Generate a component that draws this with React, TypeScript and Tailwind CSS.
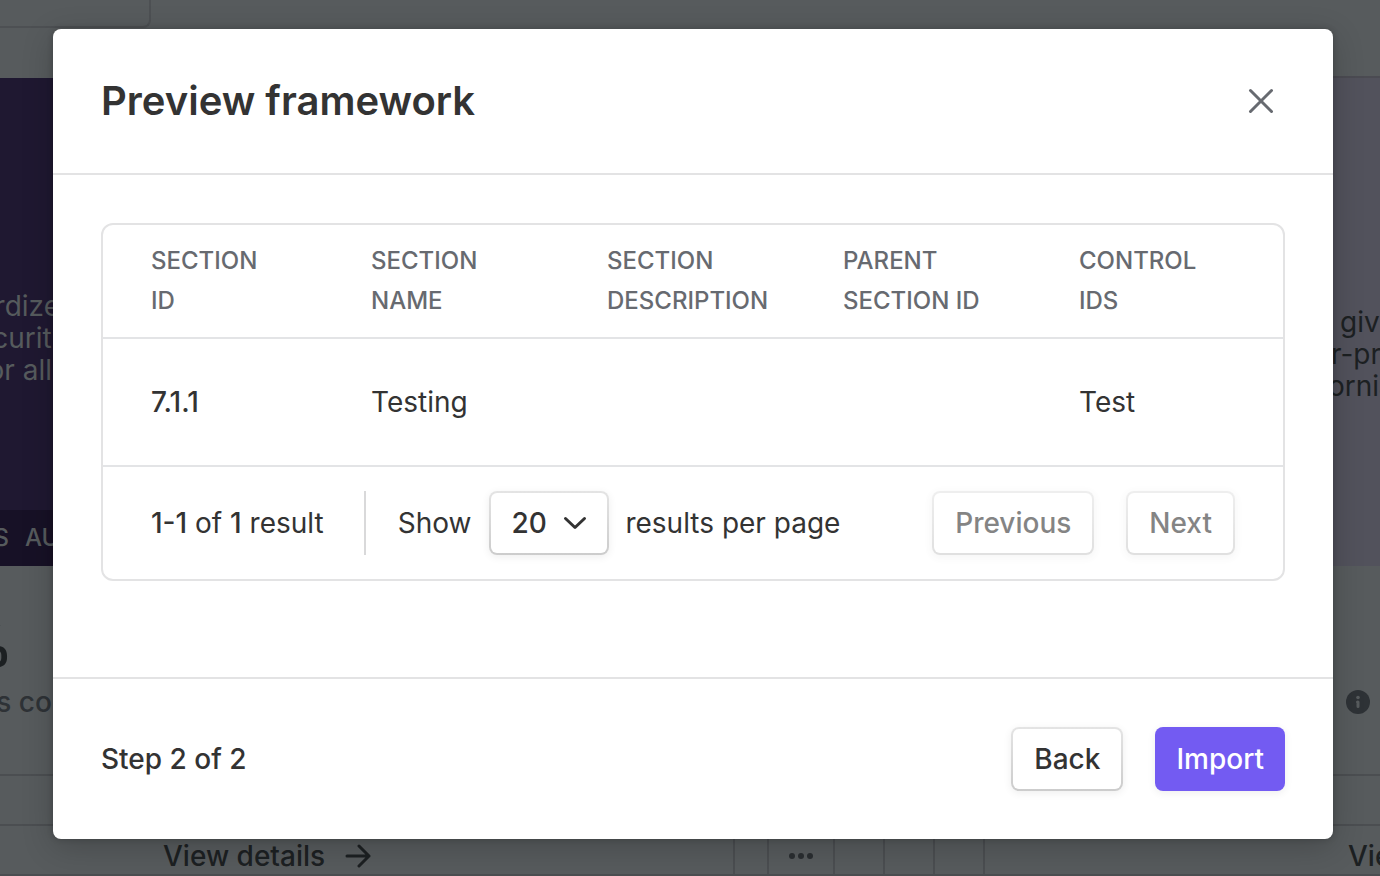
import React from 'react';

const COLUMNS = [
  { label: 'Section\nID', className: 'w-[268px] pl-12' },
  { label: 'Section\nname', className: 'w-1/5' },
  { label: 'Section\ndescription', className: 'w-1/5' },
  { label: 'Parent\nsection ID', className: 'w-1/5' },
  { label: 'Control\nIDs', className: '' },
];

const ROWS = [
  { id: '7.1.1', name: 'Testing', description: '', parent: '', controls: 'Test' },
];

const CELL = 'border-b-2 border-[#e3e4e6]';

const OUTLINE =
  'h-16 rounded-lg border-2 border-transparent [background:linear-gradient(#fff,#fff)_padding-box,linear-gradient(#e4e4e4,#cccccc)_border-box] shadow-[0_2px_8px_rgba(0,0,0,0.07)]';

const OutlineButton: React.FC<{ children: React.ReactNode; disabled?: boolean }> = ({ children, disabled }) => (
  <button type="button" disabled={disabled} className={`${OUTLINE} px-[21px] font-medium disabled:opacity-60`}>
    {children}
  </button>
);

const Backdrop: React.FC = () => (
  <div aria-hidden="true" className="flex h-full flex-col overflow-hidden whitespace-nowrap bg-[#575b5d] leading-8 text-[#1c2022]">
    <div className="h-7 w-[151px] shrink-0 rounded-br-lg border-r-2 border-b-2 border-[#4d5053]" />
    <div className="mt-12 flex h-[490px] shrink-0 justify-between">
      <div className="mt-0.5 flex w-1/2 flex-col bg-[#1f1831] text-[#565b5d]">
        <div className="grow pt-[212px]">
          <p className="flex w-[60px] justify-end">standardize</p>
          <p className="flex w-[68px] justify-end">security</p>
          <p className="flex w-[52px] justify-end">for all</p>
        </div>
        <div className="flex h-14 items-center gap-4 bg-[#171126] text-2xl font-medium">
          <span className="flex w-[9px] justify-end">CONTROLS</span>
          <span>AUDIT</span>
        </div>
      </div>
      <div className="w-[395px] border-t-2 border-[#4b4b52] bg-[#52525c] pt-[228px]">
        <p className="pl-[355px]">gives</p>
        <p className="pl-[346px]">r-profit</p>
        <p className="pl-[343px]">ornia</p>
      </div>
    </div>
    <div className="flex h-[210px] shrink-0 justify-between border-b-2 border-[#4b4e51]">
      <div className="pt-12">
        <p className="flex w-3 justify-end text-[56px] font-bold leading-16 [font-variation-settings:'opsz'_32]">%</p>
        <p className="flex w-[94px] justify-end pt-2 font-medium text-[#2e3236]">controls comp</p>
      </div>
      <svg viewBox="0 0 24 24" className="mt-[124px] mr-2.5 size-6">
        <circle cx="12" cy="12" r="12" fill="#2e3236" />
        <circle cx="12" cy="7.5" r="1.8" fill="#575b5d" />
        <path d="M11.5 12h.5v4.5" fill="none" stroke="#575b5d" strokeWidth="3" strokeLinecap="round" strokeLinejoin="round" />
      </svg>
    </div>
    <div className="h-[50px] shrink-0 border-b-2 border-[#4b4e51]" />
    <div className="flex h-[50px] shrink-0 border-b-2 border-[#4b4e51] font-medium">
      <div className="flex w-[735px] items-center gap-5 border-r-2 border-[#4b4e51] pt-3 pl-[163px]">
        View details
        <svg viewBox="0 0 26 26" className="size-[26px]" fill="none" stroke="currentColor" strokeWidth="3" strokeLinecap="round" strokeLinejoin="round">
          <path d="M2 13h22M14 3l10 10-10 10" />
        </svg>
      </div>
      <div className="w-[34px] border-r-2 border-[#4b4e51]" />
      <div className="flex w-[66px] items-center justify-center border-r-2 border-[#4b4e51] pt-3">
        <svg viewBox="0 0 24 6" className="w-6" fill="#2a2e31">
          <circle cx="3" cy="3" r="3" />
          <circle cx="12" cy="3" r="3" />
          <circle cx="21" cy="3" r="3" />
        </svg>
      </div>
      <div className="w-[50px] border-r-2 border-[#4b4e51]" />
      <div className="w-[50px] border-r-2 border-[#4b4e51]" />
      <div className="w-[50px] border-r-2 border-[#4b4e51]" />
      <div className="flex w-[395px] items-center pt-3 pl-[363px]">View details</div>
    </div>
  </div>
);

const PreviewTable: React.FC = () => (
  <div className="rounded-xl border-2 border-[#e3e3e4]">
    <table className="w-full table-fixed border-separate border-spacing-0 text-left">
      <thead className="text-2xl leading-10 text-[#676a70]">
        <tr>
          {COLUMNS.map((column) => (
            <th key={column.label} scope="col" className={`h-[114px] whitespace-pre-line font-medium uppercase ${CELL} ${column.className}`}>
              {column.label}
            </th>
          ))}
        </tr>
      </thead>
      <tbody>
        {ROWS.map((row) => (
          <tr key={row.id} className="h-32">
            <td className={`${CELL} pl-12 font-medium`}>{row.id}</td>
            <td className={CELL}>{row.name}</td>
            <td className={CELL}>{row.description}</td>
            <td className={CELL}>{row.parent}</td>
            <td className={CELL}>{row.controls}</td>
          </tr>
        ))}
      </tbody>
    </table>
    <div className="flex items-center justify-between px-12 py-6">
      <div className="flex items-center">
        <p className="flex h-16 items-center border-r-2 border-[#d9d9da] pr-10">
          <span>
            <span className="font-medium">1-1</span> of <span className="font-medium">1</span> result
          </span>
        </p>
        <label htmlFor="page-size" className="pr-[18px] pl-8">Show</label>
        <div className="grid items-center">
          <select id="page-size" defaultValue="20" className={`${OUTLINE} col-start-1 row-start-1 w-[120px] appearance-none pl-5 font-medium`}>
            <option>20</option>
            <option>50</option>
            <option>100</option>
          </select>
          <svg viewBox="0 0 24 14" className="pointer-events-none col-start-1 row-start-1 mr-[22px] w-6 justify-self-end" fill="none" stroke="currentColor" strokeWidth="3" strokeLinecap="round" strokeLinejoin="round">
            <path d="M2.5 2.5l9.5 9 9.5-9" />
          </svg>
        </div>
        <span className="pl-4">results per page</span>
      </div>
      <div className="flex gap-8">
        <OutlineButton disabled>Previous</OutlineButton>
        <OutlineButton disabled>Next</OutlineButton>
      </div>
    </div>
  </div>
);

const App: React.FC = () => {
  return (
    <div className="relative h-screen overflow-hidden text-[28px] leading-10 text-[#333333] [font-family:Inter,sans-serif] [font-variation-settings:'opsz'_14]">
      <Backdrop />
      <div className="absolute inset-0 pt-[29px] pr-[47px] pl-[53px]">
        <div role="dialog" aria-labelledby="dialog-title" className="rounded-lg bg-white shadow-[0_8px_32px_rgba(0,0,0,0.2),0_0_6px_rgba(0,0,0,0.2)]">
          <header className="flex h-[146px] items-center justify-between border-b-2 border-[#e3e3e4] px-12">
            <h1 id="dialog-title" className="text-[40px] font-semibold">Preview framework</h1>
            <button type="button" aria-label="Close" className="p-2.5 text-[#676a70]">
              <svg viewBox="0 0 28 28" className="size-7" fill="none" stroke="currentColor" strokeWidth="3" strokeLinecap="round">
                <path d="M3.5 3.5l21 21M24.5 3.5l-21 21" />
              </svg>
            </button>
          </header>
          <main className="px-12 pt-12 pb-24">
            <PreviewTable />
          </main>
          <footer className="flex items-center justify-between border-t-2 border-[#e3e3e4] p-12">
            <p className="font-medium">Step 2 of 2</p>
            <div className="flex gap-8">
              <OutlineButton>Back</OutlineButton>
              <button type="button" className="h-16 rounded-lg bg-[#735bf2] px-[21px] font-medium text-white shadow-[0_2px_8px_rgba(0,0,0,0.07)]">
                Import
              </button>
            </div>
          </footer>
        </div>
      </div>
    </div>
  );
};

export default App;
